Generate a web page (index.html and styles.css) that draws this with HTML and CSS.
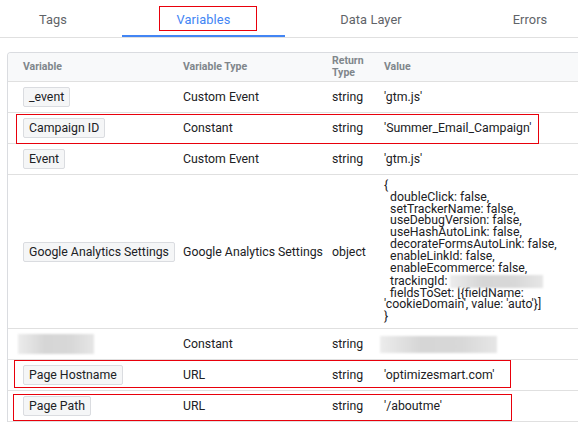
FILE: index.html
```html
<!DOCTYPE html>
<html lang="en">
<head>
<meta charset="utf-8">
<title>Variables</title>
<link rel="stylesheet" href="styles.css">
</head>
<body>
<div class="tabs">
  <div class="tab tab-tags">Tags</div>
  <div class="tab tab-vars active">Variables<span class="mark mark-tab"></span></div>
  <div class="tab tab-dl">Data Layer</div>
  <div class="tab tab-err">Errors</div>
</div>

<div class="table">
  <div class="row head">
    <div class="cell">Variable</div>
    <div class="cell">Variable Type</div>
    <div class="cell">Return Type</div>
    <div class="cell">Value</div>
  </div>

  <div class="row">
    <div class="cell"><span class="chip">_event</span></div>
    <div class="cell">Custom Event</div>
    <div class="cell">string</div>
    <div class="cell val">'gtm.js'</div>
  </div>

  <div class="row">
    <div class="cell"><span class="chip">Campaign ID</span></div>
    <div class="cell">Constant</div>
    <div class="cell">string</div>
    <div class="cell val">'Summer_Email_Campaign'</div>
    <span class="mark mark-campaign"></span>
  </div>

  <div class="row">
    <div class="cell"><span class="chip">Event</span></div>
    <div class="cell">Custom Event</div>
    <div class="cell">string</div>
    <div class="cell val">'gtm.js'</div>
  </div>

  <div class="row">
    <div class="cell"><span class="chip">Google Analytics Settings</span></div>
    <div class="cell">Google Analytics Settings</div>
    <div class="cell">object</div>
    <div class="cell val code">{
  doubleClick: false,
  setTrackerName: false,
  useDebugVersion: false,
  useHashAutoLink: false,
  decorateFormsAutoLink: false,
  enableLinkId: false,
  enableEcommerce: false,
  trackingId: <span class="blur blur-id"></span>
  fieldsToSet: [{fieldName: 'cookieDomain', value: 'auto'}]
}</div>
  </div>

  <div class="row">
    <div class="cell"><span class="blur blur-name"></span></div>
    <div class="cell">Constant</div>
    <div class="cell">string</div>
    <div class="cell val"><span class="blur blur-val"></span></div>
  </div>

  <div class="row">
    <div class="cell"><span class="chip">Page Hostname</span></div>
    <div class="cell">URL</div>
    <div class="cell">string</div>
    <div class="cell val">'optimizesmart.com'</div>
    <span class="mark mark-host"></span>
  </div>

  <div class="row">
    <div class="cell"><span class="chip">Page Path</span></div>
    <div class="cell">URL</div>
    <div class="cell">string</div>
    <div class="cell val">'/aboutme'</div>
    <span class="mark mark-path"></span>
  </div>
</div>
</body>
</html>
```

FILE: styles.css
```css
html, body {
  margin: 0;
  padding: 0;
  background: #ffffff;
  overflow: hidden;
}

body {
  font-family: Roboto, "Liberation Sans", Arial, sans-serif;
  color: #202124;
  width: 578px;
  height: 424px;
}

/* Tabs */
.tabs {
  display: flex;
  margin-left: -16px;
  height: 37px;
  border-bottom: 1px solid #e0e0e0;
}

.tab {
  position: relative;
  flex-shrink: 0;
  box-sizing: border-box;
  height: 37px;
  padding-top: 1px;
  display: flex;
  align-items: center;
  justify-content: center;
  font-size: 12.8px;
  color: #5f6368;
  letter-spacing: 0.1px;
}

.tab-tags { width: 138px; }
.tab-vars { width: 163px; }
.tab-dl { width: 172px; }
.tab-err { width: 146px; }

.tab.active {
  color: #4285f4;
  box-shadow: inset 0 -2px 0 #4285f4;
}

/* Red annotation boxes */
.mark {
  position: absolute;
  box-sizing: border-box;
  border: 1.4px solid #e8000b;
  pointer-events: none;
}

.mark-tab { left: 37px; top: 6px; width: 98px; height: 25px; }
.mark-campaign { left: 8px; top: 1px; width: 523px; height: 30px; }
.mark-host { left: 6px; top: 0; width: 497px; height: 28px; }
.mark-path { left: 5px; top: 3px; width: 499px; height: 27px; }

/* Table */
.table {
  margin: 14px 0 0 7px;
  width: 590px;
  border: 1px solid #dadce0;
  border-bottom: none;
  border-radius: 4px 4px 0 0;
  overflow: hidden;
}

.row {
  position: relative;
  display: grid;
  grid-template-columns: 160px 149px 52px 1fr;
  border-bottom: 1px solid #e0e0e0;
  font-size: 12.3px;
}

.cell {
  display: flex;
  align-items: center;
  box-sizing: border-box;
  padding: 5px 0 5px 15px;
  min-height: 30px;
  white-space: nowrap;
}

.row.head {
  background: #f8f9fa;
  font-size: 10.5px;
  font-weight: 700;
  color: #80868b;
  line-height: 12px;
}

.row.head .cell {
  padding: 2px 6px 2px 15px;
  min-height: 28px;
  white-space: normal;
}

.val {
  padding-right: 30px;
}

.code {
  display: block;
  white-space: pre-wrap;
  line-height: 11.83px;
}

.chip {
  display: inline-flex;
  align-items: center;
  box-sizing: border-box;
  height: 20px;
  padding: 0 5px;
  border: 1px solid #dadce0;
  border-radius: 2px;
  background: #f5f6f7;
  white-space: nowrap;
}

/* Redacted values */
.blur {
  display: inline-block;
  background: linear-gradient(90deg, #ececec 0%, #d6d6d6 35%, #d8d8d8 70%, #e6e6e6 100%);
  filter: blur(1px);
}

.blur-id {
  width: 93px;
  height: 13px;
  vertical-align: -3px;
}

.blur-name {
  width: 76px;
  height: 20px;
  margin-left: -5px;
}

.blur-val {
  width: 117px;
  height: 17px;
  margin-left: -4px;
}
```
